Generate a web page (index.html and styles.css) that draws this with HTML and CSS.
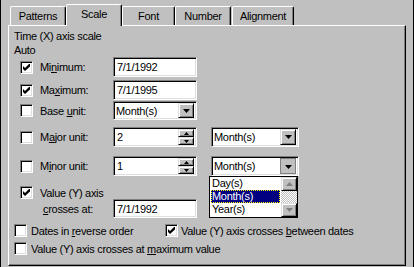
FILE: index.html
```html
<!DOCTYPE html>
<html>
<head>
<meta charset="utf-8">
<link rel="stylesheet" href="styles.css">
</head>
<body>
<div class="window">
  <div class="tabs">
    <div class="tab t-patterns">Patterns</div>
    <div class="tab t-scale active">Scale</div>
    <div class="tab t-font">Font</div>
    <div class="tab t-number">Number</div>
    <div class="tab t-align">Alignment</div>
  </div>
  <div class="panel">
    <div class="line title">Time (X) axis scale</div>
    <div class="line auto">Auto</div>

    <div class="frow r-min">
      <span class="cb checked"><svg width="7" height="7" viewBox="0 0 7 7"><polygon points="0,2 2,4 6,0 7,0 7,2.5 2,7 0,5" fill="#000"/></svg></span>
      <span class="lab">Mi<u>n</u>imum:</span>
      <span class="field"><span class="val">7/1/1992</span></span>
    </div>
    <div class="frow r-max">
      <span class="cb checked"><svg width="7" height="7" viewBox="0 0 7 7"><polygon points="0,2 2,4 6,0 7,0 7,2.5 2,7 0,5" fill="#000"/></svg></span>
      <span class="lab">Ma<u>x</u>imum:</span>
      <span class="field"><span class="val">7/1/1995</span></span>
    </div>
    <div class="frow r-base">
      <span class="cb"></span>
      <span class="lab">Base <u>u</u>nit:</span>
      <span class="field combo"><span class="val">Month(s)</span><span class="btn"><svg width="7" height="4" viewBox="0 0 7 4"><polygon points="0,0 7,0 3.5,4" fill="#000"/></svg></span></span>
    </div>
    <div class="frow r-major">
      <span class="cb"></span>
      <span class="lab">M<u>a</u>jor unit:</span>
      <span class="field spin"><span class="val">2</span><span class="spinner"><span class="sbtn"><svg width="5" height="3" viewBox="0 0 5 3"><polygon points="2.5,0 5,3 0,3" fill="#000"/></svg></span><span class="sbtn"><svg width="5" height="3" viewBox="0 0 5 3"><polygon points="0,0 5,0 2.5,3" fill="#000"/></svg></span></span></span>
      <span class="field combo unit"><span class="val">Month(s)</span><span class="btn"><svg width="7" height="4" viewBox="0 0 7 4"><polygon points="0,0 7,0 3.5,4" fill="#000"/></svg></span></span>
    </div>
    <div class="frow r-minor">
      <span class="cb"></span>
      <span class="lab">M<u>i</u>nor unit:</span>
      <span class="field spin"><span class="val">1</span><span class="spinner"><span class="sbtn"><svg width="5" height="3" viewBox="0 0 5 3"><polygon points="2.5,0 5,3 0,3" fill="#000"/></svg></span><span class="sbtn"><svg width="5" height="3" viewBox="0 0 5 3"><polygon points="0,0 5,0 2.5,3" fill="#000"/></svg></span></span></span>
      <span class="field combo unit"><span class="val">Month(s)</span><span class="btn pressed"><svg width="7" height="4" viewBox="0 0 7 4"><polygon points="0,0 7,0 3.5,4" fill="#000"/></svg></span></span>
    </div>
    <div class="frow r-vy">
      <span class="cb checked"><svg width="7" height="7" viewBox="0 0 7 7"><polygon points="0,2 2,4 6,0 7,0 7,2.5 2,7 0,5" fill="#000"/></svg></span>
      <span class="lab">Value (Y) axis</span>
    </div>
    <div class="frow r-cross">
      <span class="lab cross"><u>c</u>rosses at:</span>
      <span class="field"><span class="val">7/1/1992</span></span>
    </div>
    <div class="brow r-dates">
      <span class="group">
        <span class="cb"></span>
        <span class="blab">Dates in <u>r</u>everse order</span>
      </span>
      <span class="cb checked"><svg width="7" height="7" viewBox="0 0 7 7"><polygon points="0,2 2,4 6,0 7,0 7,2.5 2,7 0,5" fill="#000"/></svg></span>
      <span class="blab">Value (Y) axis crosses <u>b</u>etween dates</span>
    </div>
    <div class="brow r-maxv">
      <span class="cb"></span>
      <span class="blab">Value (Y) axis crosses at <u>m</u>aximum value</span>
    </div>
  </div>

  <div class="dropdown">
    <div class="items">
      <div class="item">Day(s)</div>
      <div class="item sel"><span>Month(s)</span></div>
      <div class="item">Year(s)</div>
    </div>
    <div class="vscroll">
      <span class="sbar-btn"><svg width="7" height="4" viewBox="0 0 7 4"><polygon points="3.5,0 7,4 0,4" fill="#808080"/></svg></span>
      <span class="track"></span>
      <span class="sbar-btn"><svg width="7" height="4" viewBox="0 0 7 4"><polygon points="0,0 7,0 3.5,4" fill="#808080"/></svg></span>
    </div>
  </div>
</div>
</body>
</html>
```
FILE: styles.css
```css
* { box-sizing: border-box; }
body {
  margin: 0;
  background: #c0c0c0;
  font: 11px "Liberation Sans", Arial, sans-serif;
  letter-spacing: -0.3px;
  color: #000;
}
u { text-decoration: underline; text-underline-offset: 1px; }

.window {
  width: 414px;
  height: 267px;
  border-left: 1px solid #000;
  border-right: 1px solid #000;
  background: #c0c0c0;
  position: relative;
  overflow: hidden;
}

/* tabs */
.tabs {
  display: flex;
  align-items: flex-end;
  height: 25px;
  padding-left: 9px;
}
.tab {
  height: 19px;
  border-top: 1px solid #fff;
  border-left: 1px solid #fff;
  border-right: 1px solid #000;
  box-shadow: inset -1px 0 #808080;
  border-radius: 2px 2px 0 0;
  display: flex;
  align-items: center;
  justify-content: center;
  padding-bottom: 1px;
  background: #c0c0c0;
}
.t-patterns { width: 56px; }
.t-scale { width: 56px; }
.t-font { width: 53px; }
.t-number { width: 56px; }
.t-align { width: 62px; margin-left: 1px; }
.tab.active {
  height: 22px;
  margin-bottom: -1px;
  position: relative;
  z-index: 1;
  padding-bottom: 3px;
}

/* panel */
.panel {
  margin-left: 7px;
  width: 398px;
  height: 241px;
  border-top: 1px solid #fff;
  border-left: 1px solid #fff;
  border-right: 1px solid #000;
  border-bottom: 1px solid #000;
  box-shadow: inset -1px -1px #808080;
  padding: 4px 0 0 5px;
}
.line { height: 13px; line-height: 13px; }
.auto { margin-top: 1px; }

.frow {
  display: flex;
  align-items: center;
  height: 20px;
  padding-left: 6px;
}
.frow .cb { margin-right: 7px; }
.lab { width: 73px; white-space: nowrap; }
.lab.cross { width: 70px; margin-left: 23px; }

.r-max { margin-top: 3px; }
.r-base { margin-top: 1px; height: 19px; }
.r-major { margin-top: 7px; }
.r-minor { margin-top: 9px; }
.r-vy { margin-top: 10px; height: 13px; }
.r-cross { margin-top: 0; height: 19px; }

/* checkbox */
.cb {
  flex: none;
  width: 13px;
  height: 13px;
  background: #fff;
  border: 1px solid;
  border-color: #808080 #fff #fff #808080;
  box-shadow: inset 1px 1px #000, inset -1px -1px #dfdfdf;
  display: flex;
  align-items: center;
  justify-content: center;
}
.cb svg { display: block; }

/* fields */
.field {
  flex: none;
  width: 84px;
  height: 100%;
  background: #fff;
  border: 1px solid;
  border-color: #808080 #fff #fff #808080;
  box-shadow: inset 1px 1px #000, inset -1px -1px #dfdfdf;
  padding: 2px 2px 2px 2px;
  display: flex;
  align-items: center;
}
.val { flex: 1; white-space: nowrap; padding-left: 1px; }
.combo .val { padding-left: 0; }
.unit { width: 88px; margin-left: 14px; }

.btn {
  flex: none;
  width: 16px;
  height: 16px;
  background: #c0c0c0;
  border: 1px solid;
  border-color: #dfdfdf #000 #000 #dfdfdf;
  box-shadow: inset 1px 1px #fff, inset -1px -1px #808080;
  display: flex;
  align-items: center;
  justify-content: center;
}
.btn.pressed {
  border-color: #808080;
  box-shadow: none;
  padding: 2px 0 0 1px;
}
.r-base .btn { height: 15px; }

.spinner {
  flex: none;
  display: flex;
  flex-direction: column;
  width: 16px;
  height: 16px;
}
.sbtn {
  flex: 1;
  background: #c0c0c0;
  border: 1px solid;
  border-color: #dfdfdf #000 #000 #dfdfdf;
  box-shadow: inset 1px 1px #fff, inset -1px -1px #808080;
  display: flex;
  align-items: center;
  justify-content: center;
}
.sbtn svg { display: block; }

/* bottom rows */
.brow {
  display: flex;
  align-items: center;
  height: 13px;
}
.r-dates { margin-top: 6px; }
.r-maxv { margin-top: 5px; }
.group { display: flex; align-items: center; width: 151px; }
.blab { margin-left: 4px; white-space: nowrap; }
.r-dates > .cb + .blab { margin-left: 3px; }

/* dropdown list (overlay) */
.dropdown {
  position: absolute;
  left: 208px;
  top: 176px;
  width: 89px;
  height: 42px;
  background: #fff;
  border: 1px solid #000;
  display: flex;
  padding: 0;
}
.items { flex: 1; padding: 0 1px; }
.item {
  height: 13px;
  line-height: 13px;
  padding-left: 1px;
  white-space: nowrap;
}
.item.sel {
  background: #000080;
  color: #fff;
  outline: 1px dotted #ffff00;
  outline-offset: -1px;
}
.vscroll {
  width: 16px;
  display: flex;
  flex-direction: column;
}
.sbar-btn {
  height: 14px;
  background: #c0c0c0;
  border: 1px solid;
  border-color: #dfdfdf #000 #000 #dfdfdf;
  box-shadow: inset 1px 1px #fff, inset -1px -1px #808080;
  display: flex;
  align-items: center;
  justify-content: center;
}
.track {
  flex: 1;
  background-color: #fff;
  background-image: conic-gradient(#c0c0c0 25%, #fff 0 50%, #c0c0c0 0 75%, #fff 0);
  background-size: 2px 2px;
}
```
